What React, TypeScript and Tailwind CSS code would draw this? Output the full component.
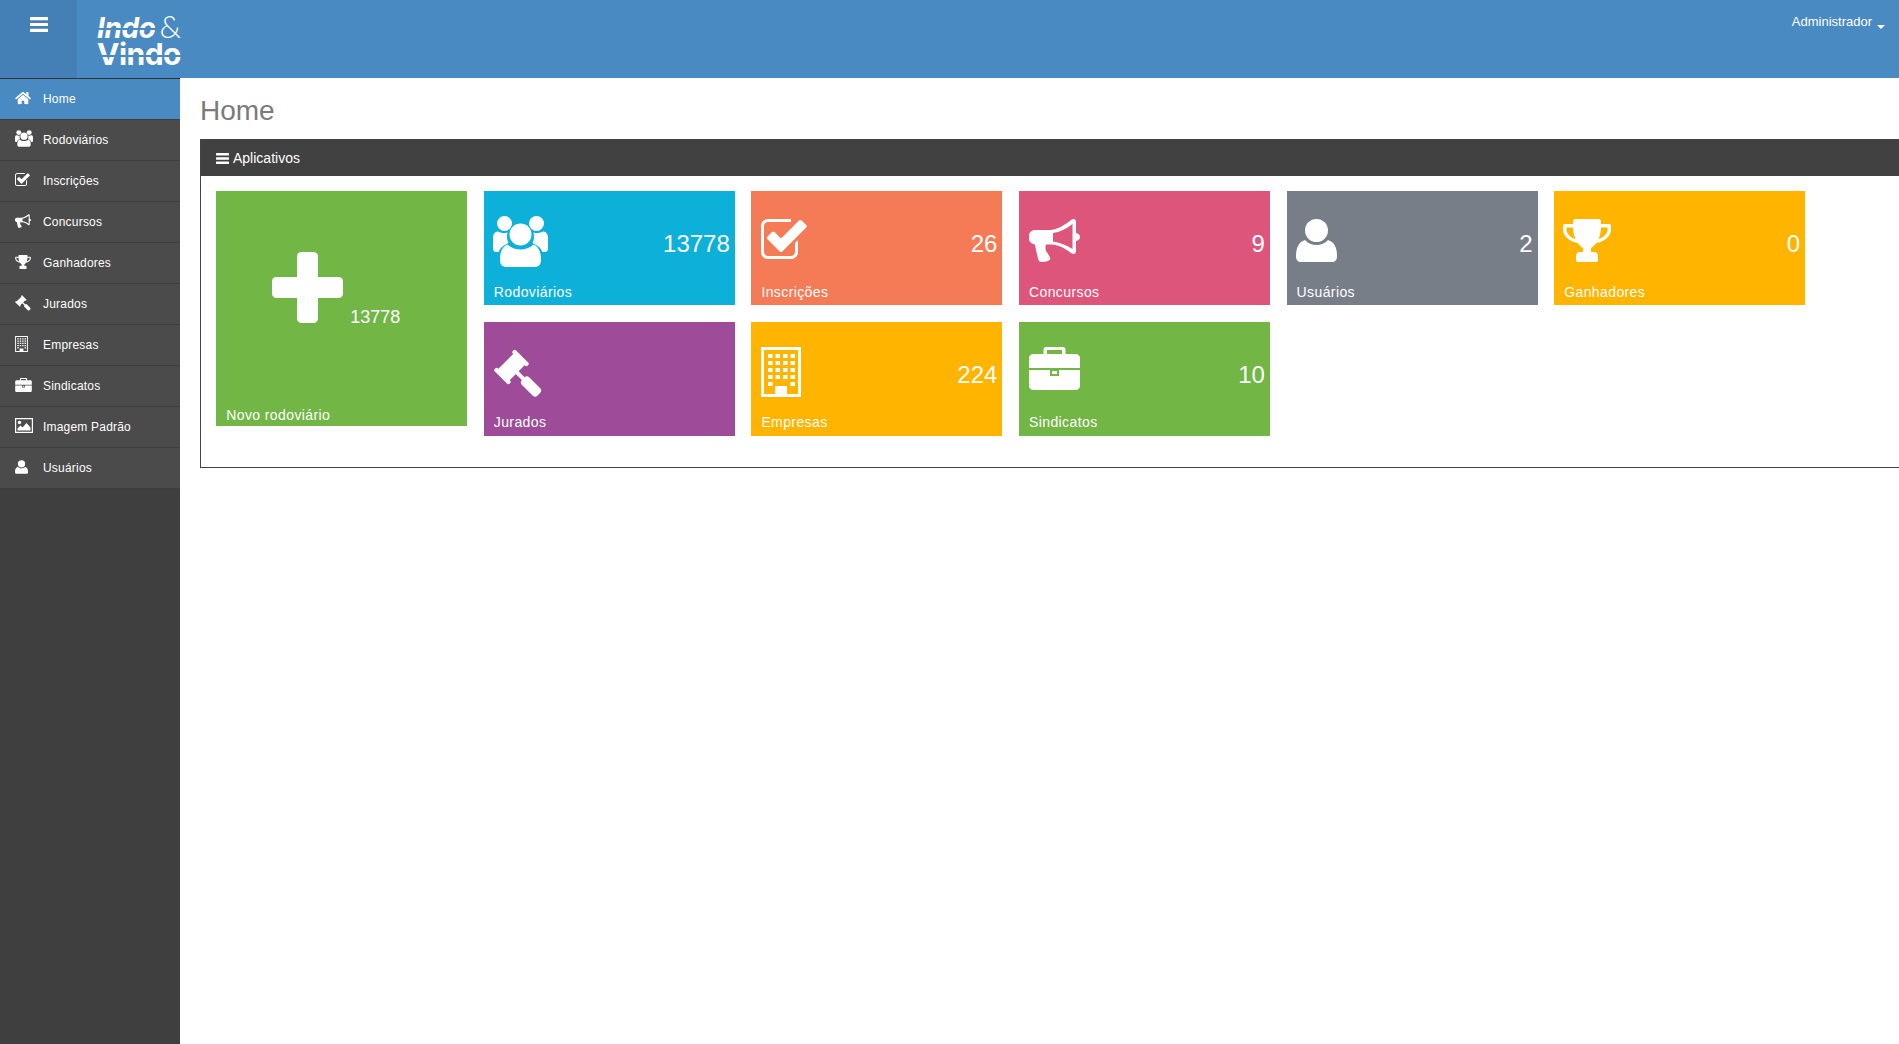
import React from "react";
import { FaHome } from "react-icons/fa";

type IP = { className?: string };

const Bars = ({ className }: IP) => (
  <svg viewBox="0 0 18 15" className={className} fill="currentColor">
    <rect x="0" y="0" width="18" height="3.2" rx="0.5" />
    <rect x="0" y="5.9" width="18" height="3.2" rx="0.5" />
    <rect x="0" y="11.8" width="18" height="3.2" rx="0.5" />
  </svg>
);

const Plus = ({ className }: IP) => (
  <svg viewBox="0 0 71 71" className={className} fill="currentColor">
    <rect x="25" y="0" width="21" height="71" rx="4.5" />
    <rect x="0" y="25" width="71" height="21" rx="4.5" />
  </svg>
);

const Users = ({ className }: IP) => (
  <svg viewBox="0 0 55 51" className={className} fill="currentColor">
    <circle cx="11.5" cy="7.5" r="7.5" />
    <circle cx="43.5" cy="7.500" r="7.5" />
    <circle cx="27.5" cy="18.5" r="11" />
    <path d="M7 44C7 36 9 31 14.500 28.500C18 32 23 33.500 27.5 33.500C32 33.500 37 32 40.500 28.500C46 31 48 36 48 44C48 49 45 51 42 51H13C10 51 7 49 7 44Z" />
    <path d="M0 22C0 17.500 2.500 15.500 5 15.500C8 17 11 17.500 14.500 16.500C13.500 20.500 14 24.500 15.500 27C10 29.500 7 32 5.800 36H3C1 36 0 34.500 0 32Z" />
    <path d="M55 22C55 17.500 52.500 15.500 50 15.500C47 17 44 17.500 40.500 16.500C41.500 20.500 41 24.500 39.500 27C45 29.500 48 32 49.200 36H52C54 36 55 34.500 55 32Z" />
  </svg>
);

const Check = ({ className }: IP) => (
  <svg viewBox="0 0 46 40" className={className} fill="currentColor">
    <path d="M7 0H30V3H7C4.800 3 3 4.800 3 7V33C3 35.200 4.800 37 7 37H30C32.200 37 34 35.200 34 33V24L37 21V33C37 37 34 40 30 40H7C3 40 0 37 0 33V7C0 3 3 0 7 0Z" />
    <path d="M6.500 17.500L11 13C11.800 12.200 12.800 12.200 13.600 13L20 19.500L38 1.500C38.800 0.700 39.800 0.700 40.600 1.500L45.200 6C46 6.800 46 7.800 45.200 8.600L21.300 32.500C20.500 33.300 19.500 33.300 18.700 32.500L6.500 20.200C5.700 19.400 5.700 18.300 6.500 17.500Z" />
  </svg>
);

const Bullhorn = ({ className }: IP) => (
  <svg viewBox="0 0 51 43" className={className} fill="currentColor">
    <path
      fillRule="evenodd"
      d="M44.500 0C46 0 47 1 47 3V14C49.500 14.500 51 16 51 18C51 20 49.500 21.500 47 22V32C47 34 46 35 44.500 35C44 35 43 34.700 42 34C36 29 29 26 22 25.500H7C3 25.500 0 23 0 19.500V16.500C0 13 3 11 7 11H22C29 10 36 6 42 1C43 0.300 44 0 44.500 0ZM43.500 5C37 10 31 13 24 14V22.500C31 23.500 37 26 43.500 30Z"
    />
    <path d="M6 25H17C16 29 16.500 31.500 18 33.500C19.500 35.500 20.500 37 21.500 40C20 42 17 43 13 43C10.500 43 9.500 42 9 39.500C8 35 6.500 30 6 25Z" />
  </svg>
);

const User = ({ className }: IP) => (
  <svg viewBox="0 0 41 43" className={className} fill="currentColor">
    <ellipse cx="20.500" cy="11.500" rx="11.500" ry="11.500" />
    <path d="M9 21C12 24.500 16 26 20.500 26C25 26 29 24.500 32 21C38 23 41 28 41 37C41 41 39 43 36 43H5C2 43 0 41 0 37C0 28 3 23 9 21Z" />
  </svg>
);

const Trophy = ({ className }: IP) => (
  <svg viewBox="0 0 48 43" className={className} fill="currentColor">
    <path
      fillRule="evenodd"
      d="M12 0H36C37 0 38 1 38 2V5H46C47.200 5 48 5.800 48 7V11C48 17 41 23 33 24C31.500 26.500 29.800 28 28 29V33H31C33.500 33 35 34.500 35 37V41C35 42 34.200 43 33 43H15C13.800 43 13 42 13 41V37C13 34.500 14.500 33 17 33H20V29C18.200 28 16.500 26.500 15 24C7 23 0 17 0 11V7C0 5.800 0.800 5 2 5H10V2C10 1 11 0 12 0ZM3.500 8.500V11C3.500 14.500 8 19 12.500 20C11 17 10.200 13 10 8.500ZM38 8.500C37.800 13 37 17 35.500 20C40 19 44.500 14.500 44.500 11V8.500Z"
    />
  </svg>
);

const Gavel = ({ className }: IP) => (
  <svg viewBox="0 0 51 49" className={className} fill="currentColor">
    <g transform="translate(17.500 18) rotate(-45)">
      <rect x="-12" y="-8" width="24" height="16" />
      <rect x="-15" y="-10.500" width="4.500" height="21" rx="2" />
      <rect x="10.500" y="-10.500" width="4.500" height="21" rx="2" />
      <rect x="-2" y="7" width="4" height="14" />
    </g>
    <rect x="-5.250" y="-11" width="10.500" height="22" rx="3.500" transform="translate(37 37.500) rotate(-45)" />
  </svg>
);

const Building = ({ className }: IP) => {
  const xs = [7, 14.500, 22, 29.500];
  const ys = [7, 14, 21, 28];
  return (
    <svg viewBox="0 0 40 50" className={className} fill="currentColor">
      <path fillRule="evenodd" d="M0 0H40V50H0ZM3 3V47H14V39H26V47H37V3Z" />
      {xs.flatMap((x) => ys.map((y) => <rect key={`${x}-${y}`} x={x} y={y} width="4.500" height="4" />))}
      <rect x="7" y="35" width="4.500" height="4" />
      <rect x="29.500" y="35" width="4.500" height="4" />
    </svg>
  );
};

const Briefcase = ({ className }: IP) => (
  <svg viewBox="0 0 51 43" className={className} fill="currentColor">
    <path fillRule="evenodd" d="M17 0H34C35.500 0 36.500 1 36.500 2.500V7H47C49 7 51 9 51 11V21H0V11C0 9 2 7 4 7H14.500V2.500C14.500 1 15.500 0 17 0ZM18 3V7H33V3Z" />
    <path fillRule="evenodd" d="M0 23H21V29H30V23H51V39C51 41 49 43 47 43H4C2 43 0 41 0 39Z" />
    <rect x="23" y="24" width="5" height="3" />
  </svg>
);

const ImageIcon = ({ className }: IP) => (
  <svg viewBox="0 0 18 15" className={className} fill="currentColor">
    <path fillRule="evenodd" d="M0 0H18V15H0ZM1.200 1.200V13.800H16.800V1.200Z" />
    <circle cx="4.500" cy="4.500" r="1.700" />
    <path d="M2.500 12.500V10.500L5.500 7.500L7.500 9.500L11.500 5L15.500 9.500V12.500Z" />
  </svg>
);

const Tile = ({
  color,
  icon,
  label,
  value,
  lower,
}: {
  color: string;
  icon: React.ReactNode;
  label: string;
  value?: string;
  lower?: boolean;
}) => (
  <div className={`${color} ${lower ? "pb-[5px]" : "pb-[4px]"} h-[114px] flex flex-col justify-between pl-[10px] pr-[5px] pt-[25px] text-white`}>
    <div className="flex justify-between items-start h-[54px]">
      {icon}
      {value && <span className="self-center mt-[2px] text-[24px] leading-[30px]">{value}</span>}
    </div>
    <div className="text-[14px] leading-[18px] tracking-[0.4px]">{label}</div>
  </div>
);

const side: { label: string; icon: React.ReactNode }[] = [
  { label: "Home", icon: <FaHome className="w-[16px] h-[14px]" /> },
  { label: "Rodoviários", icon: <Users className="w-[18px] h-[17px]" /> },
  { label: "Inscrições", icon: <Check className="w-[15px] h-[13px]" /> },
  { label: "Concursos", icon: <Bullhorn className="w-[16px] h-[14px]" /> },
  { label: "Ganhadores", icon: <Trophy className="w-[16px] h-[14px]" /> },
  { label: "Jurados", icon: <Gavel className="w-[17px] h-[16px]" /> },
  { label: "Empresas", icon: <Building className="w-[13px] h-[16px]" /> },
  { label: "Sindicatos", icon: <Briefcase className="w-[17px] h-[14px]" /> },
  { label: "Imagem Padrão", icon: <ImageIcon className="w-[18px] h-[15px]" /> },
  { label: "Usuários", icon: <User className="w-[13px] h-[14px]" /> },
];

export default function App() {
  return (
    <div className="h-[1044px] w-[1899px] overflow-hidden bg-white font-['Liberation_Sans',Arial,sans-serif] flex flex-col">
      <header className="h-[78px] shrink-0 bg-[#4a8ac3] text-white flex">
        <div className="w-[77px] bg-[#4480b5] flex justify-center pt-[17px]">
          <Bars className="w-[18px] h-[15px]" />
        </div>
        <div className="relative w-[110px] pl-[20px] pt-[12px] font-['Inter',sans-serif] font-bold">
          <div className="flex items-baseline h-[29px]">
            <span className="italic text-[28px] leading-[29px] tracking-[-0.4px]">Indo</span>
            <span className="font-['Lato',sans-serif] font-light text-[31px] leading-[29px] ml-[4px]">&amp;</span>
          </div>
          <div className="text-[30px] leading-[27px] tracking-[-0.5px]">Vindo</div>
          <div className="absolute left-[18px] top-[28px] w-[62px] h-[2px] bg-[#4a8ac3]" />
          <div className="absolute left-[18px] top-[55px] w-[90px] h-[2px] bg-[#4a8ac3]" />
        </div>
        <div className="ml-auto pt-[14px] pr-[14px] flex items-start text-[13px] leading-[16px]">
          <span>Administrador</span>
          <span className="ml-[5px] mt-[11px] w-0 h-0 border-x-[4px] border-x-transparent border-t-[4px] border-t-white" />
        </div>
      </header>
      <div className="flex flex-1 min-h-0">
        <nav className="w-[180px] shrink-0 bg-[#3f3f3f] border-t border-t-[#333]">
          {side.map((s, i) => (
            <div
              key={s.label}
              className={`h-[41px] flex items-center border-b ${i === 0 ? "bg-[#4a8ac3] border-b-[#3d3d3d]" : "bg-[#4b4b4b] border-b-[#3d3d3d]"} text-white text-[12px] tracking-[0.2px]`}
            >
              <span className="w-[43px] pl-[15px] -mt-[3px] flex shrink-0">{s.icon}</span>
              <span className="-mt-[1px]">{s.label}</span>
            </div>
          ))}
        </nav>
        <main className="flex-1 min-w-0 pl-[20px]">
          <h1 className="text-[28px] leading-[32px] text-[#7b7b7b] pt-[17px] h-[61px] font-normal">Home</h1>
          <section className="w-[1720px] border border-[#444]">
            <div className="h-[36px] bg-[#414141] text-white flex items-center pl-[15px] gap-[4px] text-[14px]">
              <Bars className="w-[13px] h-[11px]" />
              <span>Aplicativos</span>
            </div>
            <div className="grid grid-cols-[repeat(6,251px)] gap-x-[16.600px] gap-y-[17px] items-start pl-[15.200px] pt-[15px] pb-[31px]">
              <div className="row-span-2 h-[235px] bg-[#72b646] text-white flex flex-col justify-between pb-[2px] pl-[10px]">
                <div className="flex items-end pl-[46px] pt-[61px]">
                  <Plus className="w-[71px] h-[71px]" />
                  <span className="ml-[7px] -mb-[5px] text-[18px] leading-[22px]">13778</span>
                </div>
                <div className="text-[14px] leading-[18px] tracking-[0.4px]">Novo rodoviário</div>
              </div>
              <Tile color="bg-[#0cb0d9]" label="Rodoviários" value="13778" icon={<Users className="w-[55px] h-[51px] -ml-[1px]" />} />
              <Tile color="bg-[#f47b55]" label="Inscrições" value="26" icon={<Check className="w-[46px] h-[40px] mt-[3px]" />} />
              <Tile color="bg-[#de557b]" label="Concursos" value="9" icon={<Bullhorn className="w-[51px] h-[43px] mt-[3px]" />} />
              <Tile color="bg-[#787e88]" label="Usuários" value="2" icon={<User className="w-[41px] h-[43px] mt-[3px] -ml-[1px]" />} />
              <Tile color="bg-[#ffb400]" label="Ganhadores" value="0" icon={<Trophy className="w-[48px] h-[43px] mt-[3px] -ml-[1px]" />} />
              <Tile lower color="bg-[#9e4b9a]" label="Jurados" icon={<Gavel className="w-[51px] h-[49px] mt-[2px]" />} />
              <Tile lower color="bg-[#ffb400]" label="Empresas" value="224" icon={<Building className="w-[40px] h-[50px]" />} />
              <Tile lower color="bg-[#72b646]" label="Sindicatos" value="10" icon={<Briefcase className="w-[51px] h-[43px]" />} />
            </div>
          </section>
        </main>
      </div>
    </div>
  );
}
